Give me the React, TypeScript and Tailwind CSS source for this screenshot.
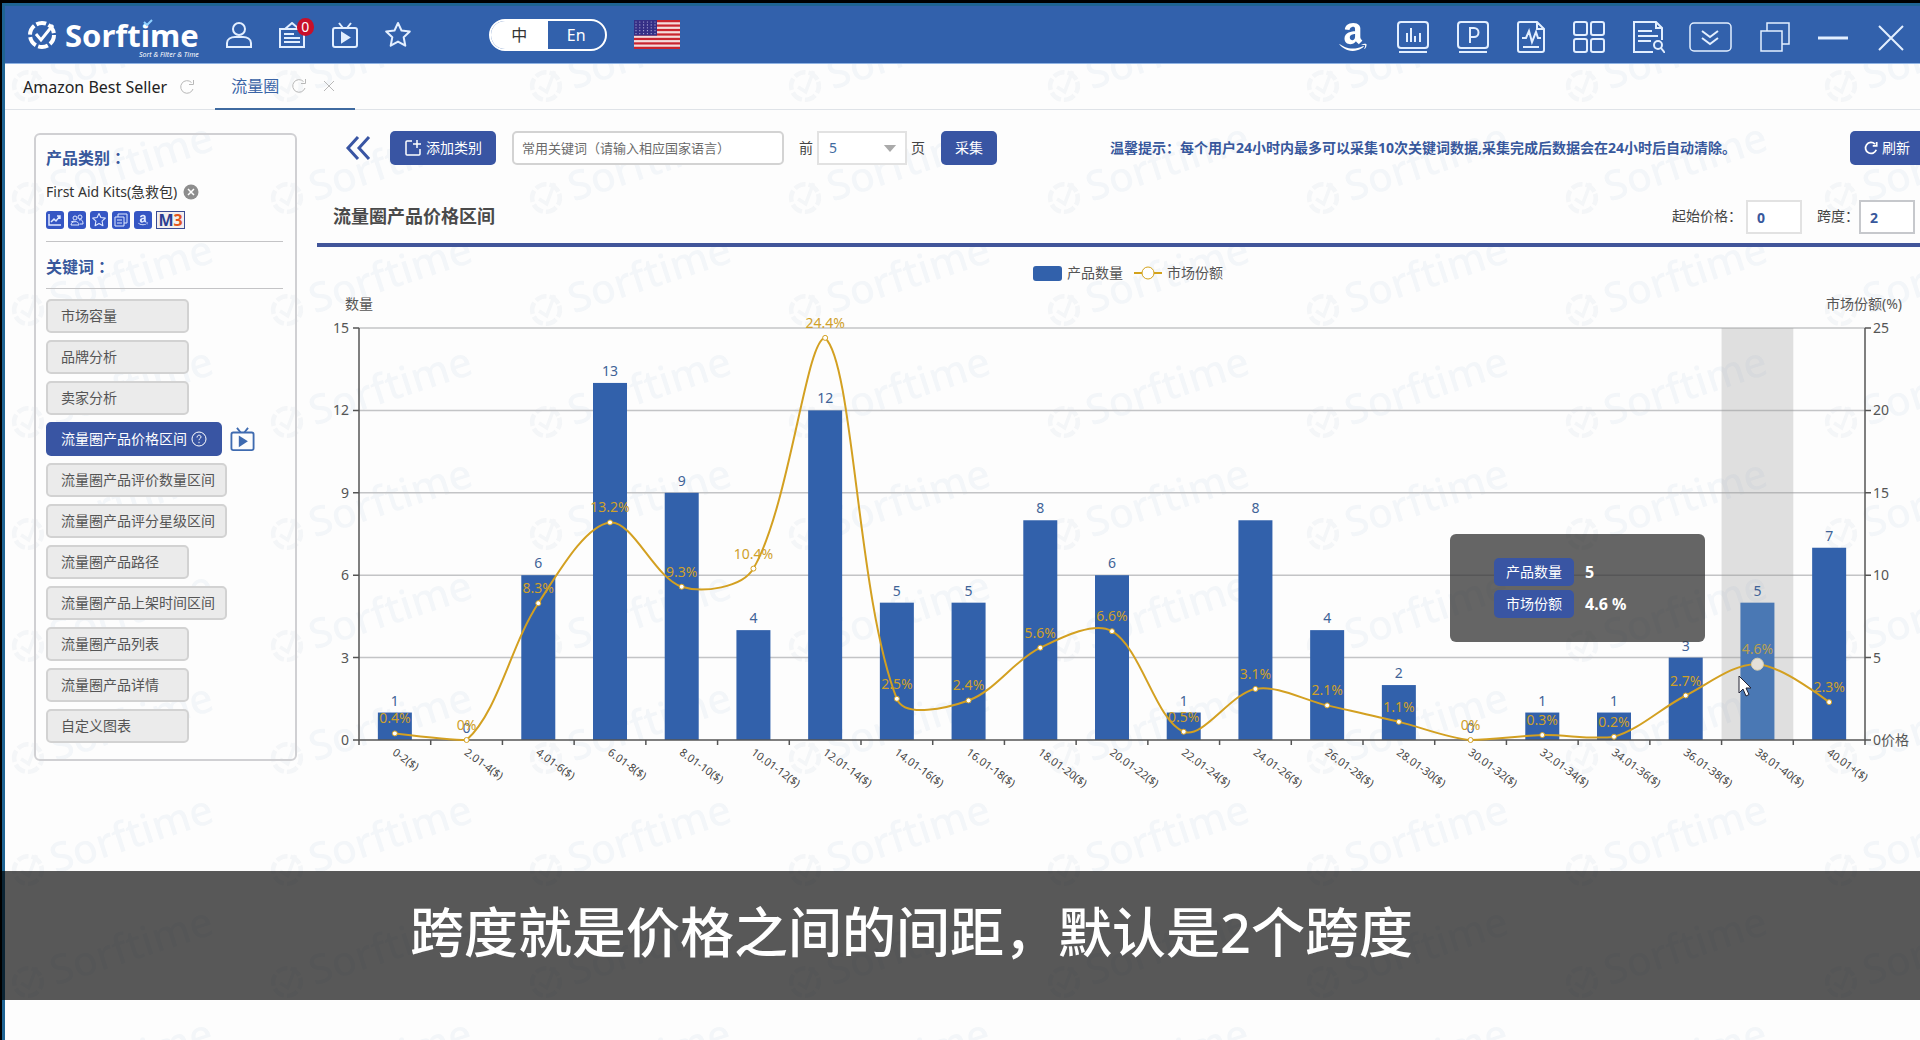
import React, { useState } from "react";
import { FaAmazon } from "react-icons/fa";

const priceBands = [
    { label: "0-2($)", count: 1, share: 0.4 },
    { label: "2.01-4($)", count: 0, share: 0 },
    { label: "4.01-6($)", count: 6, share: 8.3 },
    { label: "6.01-8($)", count: 13, share: 13.2 },
    { label: "8.01-10($)", count: 9, share: 9.3 },
    { label: "10.01-12($)", count: 4, share: 10.4 },
    { label: "12.01-14($)", count: 12, share: 24.4 },
    { label: "14.01-16($)", count: 5, share: 2.5 },
    { label: "16.01-18($)", count: 5, share: 2.4 },
    { label: "18.01-20($)", count: 8, share: 5.6 },
    { label: "20.01-22($)", count: 6, share: 6.6 },
    { label: "22.01-24($)", count: 1, share: 0.5 },
    { label: "24.01-26($)", count: 8, share: 3.1 },
    { label: "26.01-28($)", count: 4, share: 2.1 },
    { label: "28.01-30($)", count: 2, share: 1.1 },
    { label: "30.01-32($)", count: 0, share: 0 },
    { label: "32.01-34($)", count: 1, share: 0.3 },
    { label: "34.01-36($)", count: 1, share: 0.2 },
    { label: "36.01-38($)", count: 3, share: 2.7 },
    { label: "38.01-40($)", count: 5, share: 4.6 },
    { label: "40.01+($)", count: 7, share: 2.3 },
];

const menuItems = [
    "市场容量",
    "品牌分析",
    "卖家分析",
    "流量圈产品价格区间",
    "流量圈产品评价数量区间",
    "流量圈产品评分星级区间",
    "流量圈产品路径",
    "流量圈产品上架时间区间",
    "流量圈产品列表",
    "流量圈产品详情",
    "自定义图表",
];

// plot area inside the chart's viewBox
const LEFT = 42;
const RIGHT = 1548;
const TOP = 81;
const BOTTOM = 493;
const BAND = (RIGHT - LEFT) / priceBands.length;
const BAR = 34;
const ACTIVE = 19;

type Point = { x: number; y: number };

const clamp = (v: number, a: number, b: number) => Math.min(Math.max(v, a), b);

const smoothPath = (pts: Point[], smooth = 0.33) => {
    const minY = Math.min(...pts.map((p) => p.y));
    const maxY = Math.max(...pts.map((p) => p.y));
    let d = `M${pts[0].x} ${pts[0].y}`;
    let out = pts[0];
    for (let i = 1; i < pts.length; i++) {
        const p = pts[i];
        const prev = pts[i - 1];
        const next = pts[i + 1];
        let cp = p;
        let nextOut = p;
        if (next) {
            const lenPrev = Math.hypot(p.x - prev.x, p.y - prev.y);
            const lenNext = Math.hypot(p.x - next.x, p.y - next.y);
            const ratio = lenNext / (lenNext + lenPrev);
            const vx = next.x - prev.x;
            const vy = next.y - prev.y;
            cp = {
                x: p.x - vx * smooth * (1 - ratio),
                y: clamp(p.y - vy * smooth * (1 - ratio), minY, maxY),
            };
            nextOut = {
                x: p.x + vx * smooth * ratio,
                y: clamp(p.y + vy * smooth * ratio, minY, maxY),
            };
        }
        d += ` C${out.x} ${out.y} ${cp.x} ${cp.y} ${p.x} ${p.y}`;
        out = nextOut;
    }
    return d;
};

const LogoMark = () => (
    <>
        <circle cx="14" cy="14" r="12" strokeWidth="4" strokeDasharray="10 2.6" />
        <path d="M8 13l5 6L25 4" strokeWidth="3" />
    </>
);

const Watermark = () => (
    <svg aria-hidden="true" className="absolute inset-0 h-full w-full">
        <defs>
            <pattern id="mark" width="259" height="112" patternUnits="userSpaceOnUse" y="37">
                {[-259, 0, 259].map((dx) =>
                    [-112, 0, 112].map((dy) => (
                        <g key={`${dx}${dy}`} transform={`translate(${dx + 26} ${dy + 46}) rotate(-18)`} opacity="0.07">
                            <g transform="scale(1.15) translate(-14 -14)" fill="none" stroke="#7c94ac">
                                <LogoMark />
                            </g>
                            <text x="25" y="12" fontSize="41" fill="#6c94bc" fontWeight="500" fontFamily="Noto Sans">
                                Sorftime
                            </text>
                        </g>
                    ))
                )}
            </pattern>
        </defs>
        <rect width="100%" height="100%" fill="url(#mark)" />
    </svg>
);

const TvIcon = ({ className = "" }: { className?: string }) => (
    <svg viewBox="0 0 26 26" className={className} fill="none" stroke="currentColor" strokeWidth="2">
        <rect x="1" y="6" width="24" height="19" rx="2" />
        <path d="M7 1l4 5M19 1l-4 5" />
        <path d="M10 11v9l7-4.500z" fill="currentColor" />
    </svg>
);

const StarIcon = ({ className = "" }: { className?: string }) => (
    <svg viewBox="0 0 26 26" className={className} fill="none" stroke="currentColor" strokeWidth="2" strokeLinejoin="round">
        <path d="M13 1l3.500 7.500 8.300 1-6.100 5.700 1.600 8.500L13 19.600l-7.300 4.100 1.600-8.500L1.200 9.500l8.300-1z" />
    </svg>
);

const ReloadIcon = ({ className = "" }: { className?: string }) => (
    <svg viewBox="0 0 16 16" className={className} fill="none" stroke="currentColor">
        <path d="M14 10a6.300 6.300 0 1 1-1.500-6.500M14.500 1v4.500H10" />
    </svg>
);

const Flag = () => (
    <svg viewBox="0 0 46 29" className="h-[29px] w-[46px]">
        <rect width="46" height="29" fill="#f4dcdc" />
        {[0, 1, 2, 3, 4, 5, 6].map((i) => (
            <rect key={i} y={i * 4.46} width="46" height="2.230" fill="#c9242f" />
        ))}
        <rect width="23" height="15.600" fill="#352f86" />
        {[0, 1, 2, 3, 4].map((r) =>
            [0, 1, 2, 3, 4, 5].map((c) => (
                <circle key={`${r}${c}`} cx={2 + c * 3.8} cy={2 + r * 2.9} r="0.600" fill="#b9b6e0" />
            ))
        )}
    </svg>
);

const Header = () => (
    <header className="relative flex h-[58px] items-center border-b border-[#8fb2e2] bg-[#3261ac] text-[#e3efff]">
        <div className="ml-[23px] flex items-center gap-[9px] text-white">
            <svg viewBox="0 0 28 28" className="h-7 w-7" fill="none" stroke="currentColor">
                <LogoMark />
            </svg>
            <div className="relative flex flex-col items-end pt-2">
                <span className="text-[31px] leading-8 font-bold">Sorftime</span>
                <svg viewBox="0 0 10 8" className="absolute top-2 left-[78px] h-2 w-[10px]" fill="none" stroke="#8fd0ff" strokeWidth="2">
                    <path d="M1 3l3 3 5-5" />
                </svg>
                <span className="text-[7px] leading-2 whitespace-nowrap italic">Sort & Filter & Time</span>
            </div>
        </div>

        <div className="ml-[27px] flex items-center gap-[27px]">
            <button aria-label="account">
                <svg viewBox="0 0 26 26" className="h-[26px] w-[26px]" fill="none" stroke="currentColor" strokeWidth="2">
                    <circle cx="13" cy="7" r="6" />
                    <path d="M1 25v-4c0-4 4-6 8-6h8c4 0 8 2 8 6v4z" />
                </svg>
            </button>
            <button aria-label="messages" className="relative">
                <svg viewBox="0 0 26 26" className="h-[26px] w-[26px]" fill="none" stroke="currentColor" strokeWidth="2">
                    <path d="M1 7h24v18H1zM6 7l7-6 7 6M5 12h10M5 16h16M5 20h16" />
                </svg>
                <span className="absolute -top-1 left-[18px] flex h-[18px] w-[17px] items-center justify-center rounded-full bg-[#c8102a] text-sm leading-none text-white">
                    0
                </span>
            </button>
            <button aria-label="videos">
                <TvIcon className="h-[26px] w-[26px]" />
            </button>
            <button aria-label="favourites">
                <StarIcon className="h-7 w-[26px]" />
            </button>
        </div>

        <div className="ml-[78px] flex h-8 w-[118px] overflow-hidden rounded-full border-2 border-white text-base">
            <button className="w-1/2 bg-white text-[#333]">中</button>
            <button className="w-1/2 text-white">En</button>
        </div>
        <button aria-label="site" className="ml-[27px]">
            <Flag />
        </button>

        <div className="ml-auto flex items-center gap-7 pt-1">
            <button aria-label="Amazon">
                <FaAmazon className="h-8 w-8 text-white" />
            </button>
            <button aria-label="market report">
                <svg viewBox="0 0 32 32" className="h-8 w-8" fill="none" stroke="currentColor" strokeWidth="2">
                    <rect x="1" y="1" width="30" height="26" rx="3" />
                    <path d="M2 31h28M10 12v9M14 7v14M18 15v6M23 12v9" />
                </svg>
            </button>
            <button aria-label="product report">
                <svg viewBox="0 0 32 32" className="h-8 w-8" fill="none" stroke="currentColor" strokeWidth="2">
                    <rect x="1" y="1" width="30" height="26" rx="3" />
                    <path d="M2 31h28M13 22V7h4a4 4 0 0 1 0 9h-4" />
                </svg>
            </button>
            <button aria-label="monitor">
                <svg viewBox="0 0 28 32" className="h-8 w-7" fill="none" stroke="currentColor" strokeWidth="2">
                    <path d="M20 1H3a2 2 0 0 0-2 2v26a2 2 0 0 0 2 2h22a2 2 0 0 0 2-2V8zM20 1v7h7M5 17h4l3-7 3 11 4-10 2 6h3M6 26h16" />
                </svg>
            </button>
            <button aria-label="apps">
                <svg viewBox="0 0 32 32" className="h-8 w-8" fill="none" stroke="currentColor" strokeWidth="2">
                    <rect x="1" y="1" width="13" height="13" rx="2" />
                    <rect x="18" y="1" width="13" height="13" rx="2" />
                    <rect x="1" y="18" width="13" height="13" rx="2" />
                    <rect x="18" y="18" width="13" height="13" rx="2" />
                </svg>
            </button>
            <button aria-label="search records">
                <svg viewBox="0 0 32 32" className="h-8 w-8" fill="none" stroke="currentColor" strokeWidth="2">
                    <path d="M29 19V7l-6-6H1v30h19M23 1v6h6M5 10h14M5 15h20M5 20h13" />
                    <circle cx="25" cy="24" r="4" />
                    <path d="M28 27l4 5" />
                </svg>
            </button>
        </div>
        <div className="mr-[14px] ml-6 flex items-center gap-7 pt-1">
            <button aria-label="more">
                <svg viewBox="0 0 43 30" className="h-[30px] w-[43px]" fill="none" stroke="currentColor" strokeWidth="2">
                    <rect x="1" y="1" width="41" height="28" rx="4" strokeWidth="1.500" />
                    <path d="M13 9l8 6 8-6M13 16l8 6 8-6" />
                </svg>
            </button>
            <button aria-label="restore">
                <svg viewBox="0 0 30 30" className="h-[30px] w-[30px]" fill="none" stroke="currentColor" strokeWidth="1.500">
                    <path d="M1 9h21v20H1zM7 9V1h22v21h-7" />
                </svg>
            </button>
            <button aria-label="minimize">
                <svg viewBox="0 0 30 30" className="h-[30px] w-[30px]" fill="none" stroke="currentColor" strokeWidth="3">
                    <path d="M0 16h30" />
                </svg>
            </button>
            <button aria-label="close">
                <svg viewBox="0 0 30 30" className="h-[30px] w-[30px]" fill="none" stroke="currentColor" strokeWidth="2">
                    <path d="M3 4l24 24M27 4L3 28" />
                </svg>
            </button>
        </div>
    </header>
);

const Tabs = () => (
    <nav className="relative flex h-[46px] items-stretch border-b border-[#dfe3e8]">
        <div className="flex items-center gap-3 pr-5 pl-[18px]">
            <a href="#best" className="text-base text-[#222]">
                Amazon Best Seller
            </a>
            <button aria-label="reload">
                <ReloadIcon className="h-4 w-4 text-[#b8b8b8]" />
            </button>
        </div>
        <div className="-mb-px flex items-center gap-3 border-b-2 border-[#3f6aa0] px-4">
            <a href="#traffic" className="text-base text-[#3a64a6]">
                流量圈
            </a>
            <button aria-label="reload">
                <ReloadIcon className="h-4 w-4 text-[#b8b8b8]" />
            </button>
            <button aria-label="close tab" className="px-1">
                <svg viewBox="0 0 12 12" className="h-3 w-3" stroke="#b8b8b8">
                    <path d="M1 1l10 10M11 1L1 11" />
                </svg>
            </button>
        </div>
    </nav>
);

const tileClass = "flex h-[18px] w-[18px] items-center justify-center rounded-[3px] bg-[#3556c4] text-[#dfe8ff]";

const SideTitle = ({ children }: { children: React.ReactNode }) => (
    <h2 className="text-base leading-7 font-bold text-[#38589c]">
        {children}
        <span className="font-['Noto_Sans_CJK_TC',sans-serif]">：</span>
    </h2>
);

const Sidebar = ({ active, onSelect }: { active: string; onSelect: (s: string) => void }) => (
    <aside className="relative mt-[23px] ml-[29px] w-[263px] shrink-0 self-start rounded-md border-2 border-[#d0d0d3] px-[10px] pt-2 pb-4">
        <SideTitle>产品类别</SideTitle>
        <div className="mt-[6px] flex h-7 items-center gap-[6px] text-sm text-[#333]">
            <span>First Aid Kits(急救包)</span>
            <button aria-label="remove category">
                <svg viewBox="0 0 16 16" className="h-4 w-4">
                    <circle cx="8" cy="8" r="7.500" fill="#8d8d8d" />
                    <path d="M5 5l6 6M11 5l-6 6" stroke="#fff" strokeWidth="1.500" />
                </svg>
            </button>
        </div>
        <div className="mt-[5px] flex gap-1">
            <button aria-label="trend" className={tileClass}>
                <svg viewBox="0 0 18 18" className="h-[18px] w-[18px]" fill="none" stroke="currentColor" strokeWidth="1.500">
                    <path d="M3 3v11h12M5 11l3-3 2 2 4-5M11 5h3v3" />
                </svg>
            </button>
            <button aria-label="sellers" className={tileClass}>
                <svg viewBox="0 0 18 18" className="h-[18px] w-[18px]" fill="none" stroke="currentColor">
                    <circle cx="7" cy="7" r="2" />
                    <circle cx="12" cy="6" r="2" />
                    <path d="M3 14c0-4 8-5 8 0zM11 9c3-1 4 1 4 4h-3M3 11l3-1" />
                </svg>
            </button>
            <button aria-label="star" className={tileClass}>
                <StarIcon className="h-[14px] w-[14px]" />
            </button>
            <button aria-label="list" className={tileClass}>
                <svg viewBox="0 0 18 18" className="h-[18px] w-[18px]" fill="none" stroke="currentColor">
                    <path d="M3 6h9v9H3zM6 6V3h9v9h-3M5 9h5M5 12h5" />
                </svg>
            </button>
            <button aria-label="open on Amazon" className={tileClass}>
                <FaAmazon className="h-3 w-3" />
            </button>
            <button className="flex h-[18px] w-[29px] items-center justify-center border border-[#3a4c94] bg-[#f3efee] text-base leading-none font-bold text-[#2c3f92]">
                M<span className="text-[#e2571d]">3</span>
            </button>
        </div>
        <hr className="mt-3 mr-[2px] mb-[10px] border-[#c4c4c6]" />
        <SideTitle>关键词</SideTitle>
        <hr className="mt-[7px] mr-[2px] border-[#c4c4c6]" />
        <ul className="mt-[10px] flex flex-col gap-[7px]">
            {menuItems.map((item) => (
                <li key={item} className="flex items-center gap-2">
                    {item === active ? (
                        <>
                            <button className="flex h-[34px] min-w-[143px] items-center gap-1 rounded-[5px] bg-[#3955a3] px-[15px] text-sm text-white">
                                {item}
                                <svg viewBox="0 0 16 16" className="h-4 w-4" fill="none" stroke="currentColor">
                                    <circle cx="8" cy="8" r="7" />
                                    <path d="M6 6.500c0-3 4-3 4-.500 0 1.500-2 1.500-2 3.200M8 10.800v1.400" />
                                </svg>
                            </button>
                            <TvIcon className="h-6 w-[25px] text-[#3f6bb0]" />
                        </>
                    ) : (
                        <button
                            onClick={() => onSelect(item)}
                            className="h-[34px] min-w-[143px] rounded-[5px] border-2 border-[#d2d2d2] bg-[#ebebeb] pr-[10px] pl-[13px] text-left text-sm text-[#555]"
                        >
                            {item}
                        </button>
                    )}
                </li>
            ))}
        </ul>
    </aside>
);

const Toolbar = () => (
    <div className="flex h-9 items-center whitespace-nowrap">
        <button aria-label="collapse" className="ml-7">
            <svg viewBox="0 0 26 26" className="h-[26px] w-[26px]" fill="none" stroke="#3955a3" strokeWidth="3">
                <path d="M13 2L3 13l10 11M24 2L14 13l10 11" />
            </svg>
        </button>
        <button className="ml-[19px] flex h-[34px] w-[106px] items-center justify-center gap-1 rounded-[5px] bg-[#3955a3] text-sm text-white">
            <svg viewBox="0 0 18 18" className="h-[18px] w-[18px]" fill="none" stroke="currentColor" strokeWidth="1.500">
                <path d="M8 2H3a1 1 0 0 0-1 1v12a1 1 0 0 0 1 1h12a1 1 0 0 0 1-1v-5M13 1v8M9 5h8" />
            </svg>
            添加类别
        </button>
        <input
            aria-label="常用关键词"
            placeholder="常用关键词（请输入相应国家语言）"
            className="ml-4 h-[34px] w-[272px] rounded-[5px] border-2 border-[#d3d3d3] bg-white px-2 text-[13px] placeholder:text-[#6b6b6b]"
        />
        <label htmlFor="pages" className="ml-[15px] text-sm text-[#444]">
            前
        </label>
        <div className="relative ml-1">
            <select id="pages" defaultValue="5" className="h-[34px] w-[90px] appearance-none border-2 border-[#e2e2e2] bg-white px-[10px] text-sm text-[#3f6aa0]">
                <option>5</option>
                <option>10</option>
            </select>
            <svg viewBox="0 0 14 8" className="pointer-events-none absolute top-[14px] right-[10px] h-[7px] w-[14px]" fill="#aaa">
                <path d="M0 0h14L7 8z" />
            </svg>
        </div>
        <span className="ml-1 text-sm text-[#444]">页</span>
        <button className="ml-4 h-[34px] w-14 rounded-[5px] bg-[#3955a3] text-sm text-white">采集</button>
        <p className="ml-auto text-sm font-bold text-[#38589c]">
            温馨提示：每个用户24小时内最多可以采集10次关键词数据,采集完成后数据会在24小时后自动清除。
        </p>
        <button className="-mr-2 ml-[114px] flex h-[34px] w-[78px] items-center gap-1 rounded-[5px] bg-[#3955a3] pl-[14px] text-sm text-white">
            <ReloadIcon className="h-[14px] w-[14px] stroke-2" />
            刷新
        </button>
    </div>
);

const PriceChart = () => {
    const points = priceBands.map((b, i) => ({
        x: LEFT + BAND * (i + 0.5),
        y: BOTTOM - (b.share / 25) * (BOTTOM - TOP),
    }));
    const countY = (n: number) => BOTTOM - (n / 15) * (BOTTOM - TOP);

    return (
        <svg viewBox="0 0 1603 560" className="block w-full" fontSize="14" fill="#555">
            <rect x="716" y="19" width="29" height="15" rx="3" fill="#3261ab" />
            <text x="750" y="31">产品数量</text>
            <path d="M817 26h28" stroke="#d3a21b" strokeWidth="2" />
            <circle cx="831" cy="26" r="6" fill="#fff" stroke="#d3a21b" />
            <text x="850" y="31">市场份额</text>
            <text x="28" y="62">数量</text>
            <text x="1509" y="62">市场份额(%)</text>

            {[3, 6, 9, 12, 15].map((n) => (
                <path key={n} d={`M${LEFT} ${countY(n)}H${RIGHT}`} stroke="#c3c4c6" strokeWidth="1.500" />
            ))}
            <rect x={LEFT + BAND * ACTIVE} y={TOP} width={BAND} height={BOTTOM - TOP} fill="#969696" fillOpacity="0.290" />

            {priceBands.map((b, i) => (
                <rect
                    key={b.label}
                    x={points[i].x - BAR / 2}
                    y={countY(b.count)}
                    width={BAR}
                    height={BOTTOM - countY(b.count)}
                    fill={i === ACTIVE ? "#4a78b4" : "#3261ab"}
                />
            ))}

            <g stroke="#555" strokeWidth="1.500">
                <path d={`M${LEFT} ${TOP}V${BOTTOM}H${RIGHT}V${TOP}`} fill="none" />
                {[0, 1, 2, 3, 4, 5].map((i) => (
                    <path key={i} d={`M${LEFT - 6} ${countY(i * 3)}h6M${RIGHT} ${countY(i * 3)}h6`} />
                ))}
                {Array.from({ length: 22 }, (_, i) => (
                    <path key={i} d={`M${LEFT + BAND * i} ${BOTTOM}v5`} />
                ))}
            </g>
            {[0, 1, 2, 3, 4, 5].map((i) => (
                <React.Fragment key={i}>
                    <text x="32" y={countY(i * 3) + 5} textAnchor="end">
                        {i * 3}
                    </text>
                    <text x="1556" y={countY(i * 3) + 5}>
                        {i === 0 ? "0价格" : i * 5}
                    </text>
                </React.Fragment>
            ))}

            {priceBands.map((b, i) => (
                <React.Fragment key={b.label}>
                    <text x={points[i].x} y={countY(b.count) - 7} textAnchor="middle" fill="#3f6397">
                        {b.count}
                    </text>
                    <text
                        transform={`translate(${points[i].x - 3} ${BOTTOM + 14}) rotate(36)`}
                        fontSize="11"
                        fill="#444"
                    >
                        {b.label}
                    </text>
                </React.Fragment>
            ))}

            <path d={smoothPath(points)} fill="none" stroke="#d3a021" strokeWidth="2" />
            {points.map((p, i) => (
                <React.Fragment key={i}>
                    <circle
                        cx={p.x}
                        cy={p.y}
                        r={i === ACTIVE ? 6 : 2.5}
                        fill={i === ACTIVE ? "#e4e0d8" : "#fff"}
                        stroke={i === ACTIVE ? "#d9cfae" : "#d3a021"}
                    />
                    <text x={p.x} y={p.y - 10} textAnchor="middle" fill={i === ACTIVE ? "#b9a052" : "#cfa02a"}>
                        {priceBands[i].share}%
                    </text>
                </React.Fragment>
            ))}
        </svg>
    );
};

const Tooltip = () => (
    <div className="absolute top-[287px] right-[215px] flex h-[108px] w-[255px] flex-col gap-1 rounded-md bg-[#323232]/75 pt-6 pl-11">
        {[
            ["产品数量", "5"],
            ["市场份额", "4.6 %"],
        ].map(([name, value]) => (
            <div key={name} className="flex items-center gap-[11px]">
                <span className="flex h-7 w-20 items-center justify-center rounded-[5px] bg-[#3955a3] text-sm text-white">{name}</span>
                <span className="text-base leading-6 font-bold text-white">{value}</span>
            </div>
        ))}
    </div>
);

const App = () => {
    const [active, setActive] = useState("流量圈产品价格区间");

    return (
        <div className="relative flex min-h-screen flex-col overflow-hidden border-t-[3px] border-l-2 border-black bg-[#fdfdfd] font-['Noto_Sans','Noto_Sans_CJK_SC',sans-serif]">
            <div className="flex-1 border-t-[3px] border-l-[3px] border-[#1f6493] pb-48">
                <Watermark />
                <Header />
                <Tabs />
                <div className="flex">
                    <Sidebar active={active} onSelect={setActive} />
                    <main className="relative ml-5 min-w-0 flex-1 pt-5">
                        <Toolbar />
                        <div className="mt-[17px] flex h-[64px] items-end border-b-4 border-[#41559a] pb-[9px] text-sm text-[#444]">
                            <h1 className="ml-4 text-lg leading-9 font-bold text-[#4a4a4a]">{active}</h1>
                            <label htmlFor="start" className="ml-auto leading-9">
                                起始价格：
                            </label>
                            <input id="start" defaultValue="0" className="ml-1 h-[34px] w-14 border-2 border-[#e2e2e2] bg-white px-[9px] font-bold text-[#38589c]" />
                            <label htmlFor="span" className="ml-[15px] leading-9">
                                跨度：
                            </label>
                            <input id="span" defaultValue="2" className="mr-[5px] h-[34px] w-14 border-2 border-[#c6c8cc] bg-white px-[9px] font-bold text-[#38589c]" />
                        </div>
                        <div className="relative">
                            <PriceChart />
                            <Tooltip />
                            <svg viewBox="0 0 14 22" className="absolute top-[428px] right-[168px] h-[22px] w-[14px]" fill="#fff" stroke="#223" strokeLinejoin="round">
                                <path d="M1 1v17l4-4 3 7 3-1.500-3-6.500h5z" />
                            </svg>
                        </div>
                    </main>
                </div>
            </div>
            <p className="absolute inset-x-0 bottom-10 flex h-[129px] items-center bg-black/65 pb-2 pl-[408px] text-[54px] leading-none font-medium whitespace-nowrap text-white">
                跨度就是价格之间的间距，默认是2个跨度
            </p>
        </div>
    );
};

export default App;
